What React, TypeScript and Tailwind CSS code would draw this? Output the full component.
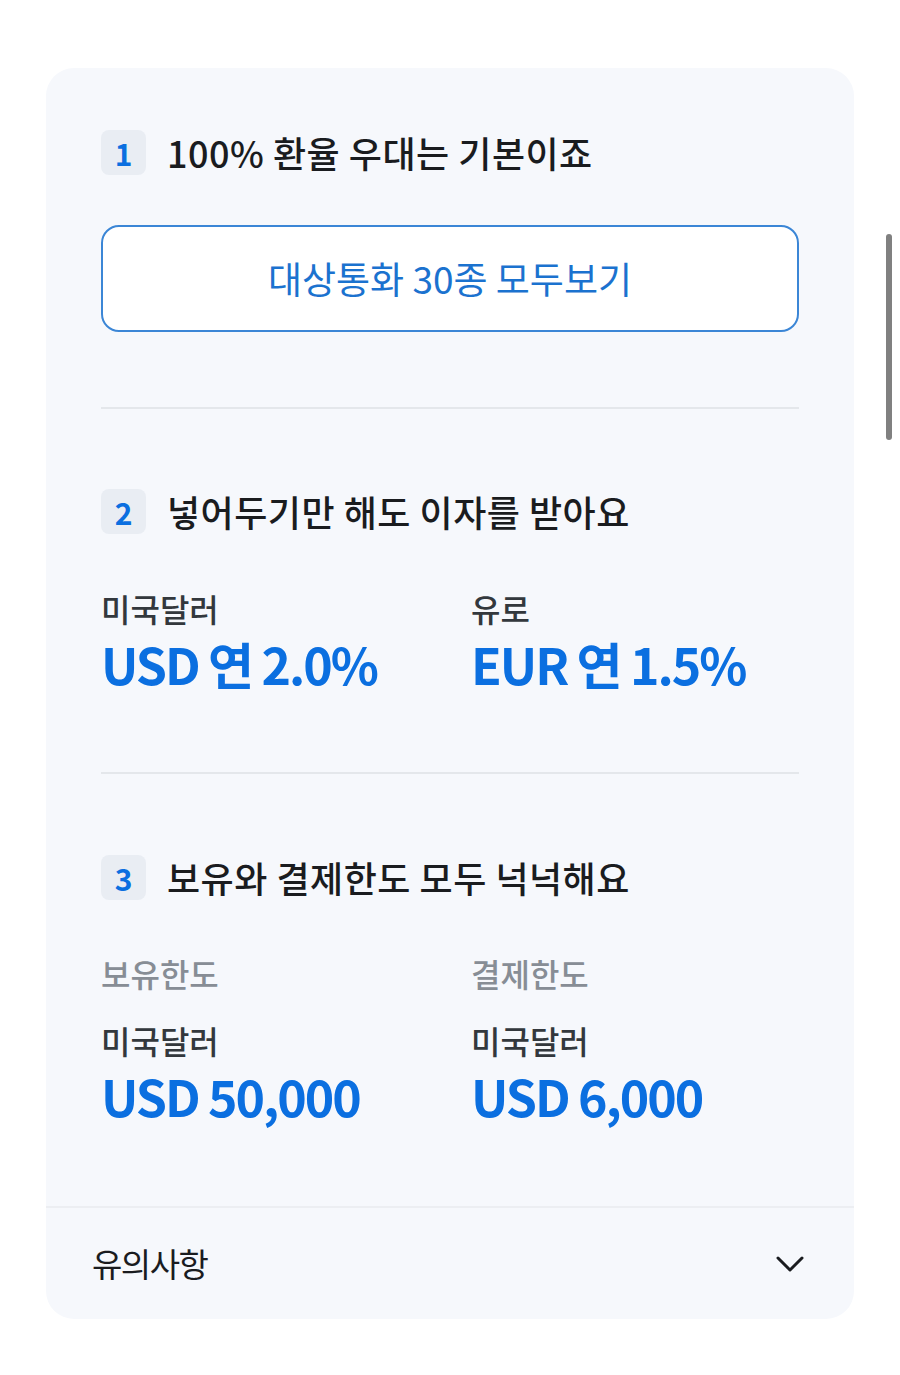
import React from "react";

const FONT = { fontFamily: '"Noto Sans CJK KR", "Noto Sans", sans-serif' };

type Item = { label: string; value: string };

const Badge: React.FC<{ n: number }> = ({ n }) => (
  <div className="flex h-[45px] w-[45px] items-center justify-center rounded-[8px] bg-[#e9edf3] text-[30px] font-bold leading-none text-[#0b6fe0]">
    {n}
  </div>
);

const SectionTitle: React.FC<{ n: number; title: string }> = ({ n, title }) => (
  <div className="flex h-[45px] items-center gap-[21px]">
    <Badge n={n} />
    <span className="text-[36px] font-medium leading-[45px] tracking-[0.5px] text-[#1a1c1f]">
      {title}
    </span>
  </div>
);

const ValueGrid: React.FC<{ items: Item[] }> = ({ items }) => (
  <div className="grid grid-cols-[370px_1fr]">
    {items.map((item, i) => (
      <div key={i}>
        <div className="mt-[54px] text-[32px] font-medium leading-[40px] tracking-[0px] text-[#33383d]">
          {item.label}
        </div>
        <div className="mt-[5px] text-[50px] font-bold leading-[60px] tracking-[-2px] text-[#0b6fe0]">
          {item.value}
        </div>
      </div>
    ))}
  </div>
);

export default function App() {
  return (
    <div className="relative min-h-[1375px] bg-white" style={FONT}>
      <div className="mx-[46px] mt-[68px] inline-block w-[808px] overflow-hidden rounded-[28px] bg-[#f6f8fc]">
        <div className="px-[55px] pt-[62px] pb-[81px]">
          <SectionTitle n={1} title="100% 환율 우대는 기본이죠" />
          <button className="mt-[50px] flex h-[107px] w-full items-center justify-center rounded-[18px] border-2 border-[#3b86d6] bg-white text-[37px] leading-none tracking-[0px] text-[#1b72cf]">
            대상통화 30종 모두보기
          </button>
          <div className="mt-[75px] h-[2px] bg-[#e4e7eb]" />

          <div className="mt-[80px]">
            <SectionTitle n={2} title="넣어두기만 해도 이자를 받아요" />
          </div>
          <ValueGrid
            items={[
              { label: "미국달러", value: "USD 연 2.0%" },
              { label: "유로", value: "EUR 연 1.5%" },
            ]}
          />
          <div className="mt-[79px] h-[2px] bg-[#e4e7eb]" />

          <div className="mt-[81px]">
            <SectionTitle n={3} title="보유와 결제한도 모두 넉넉해요" />
          </div>
          <div className="grid grid-cols-[370px_1fr]">
            {[
              { head: "보유한도", label: "미국달러", value: "USD 50,000" },
              { head: "결제한도", label: "미국달러", value: "USD 6,000" },
            ].map((c, i) => (
              <div key={i}>
                <div className="mt-[53px] text-[32px] font-medium leading-[40px] tracking-[0px] text-[#878d95]">
                  {c.head}
                </div>
                <div className="mt-[27px] text-[32px] font-medium leading-[40px] tracking-[0px] text-[#33383d]">
                  {c.label}
                </div>
                <div className="mt-[5px] text-[50px] font-bold leading-[60px] tracking-[-2px] text-[#0b6fe0]">
                  {c.value}
                </div>
              </div>
            ))}
          </div>
        </div>
        <div className="h-[2px] bg-[#eceef2]" />
        <div className="flex h-[111px] items-center justify-between pl-[46px] pr-[50px]">
          <span className="text-[33px] leading-none tracking-[-1.5px] text-[#1a1c1f]">유의사항</span>
          <svg width="28" height="18" viewBox="0 0 28 18" fill="none">
            <path d="M2 3 L14 15 L26 3" stroke="#1a1c1f" strokeWidth="3" strokeLinecap="round" strokeLinejoin="round" />
          </svg>
        </div>
      </div>
      <div className="absolute left-[886px] top-[234px] h-[206px] w-[6px] rounded-full bg-[#808080]" />
    </div>
  );
}
